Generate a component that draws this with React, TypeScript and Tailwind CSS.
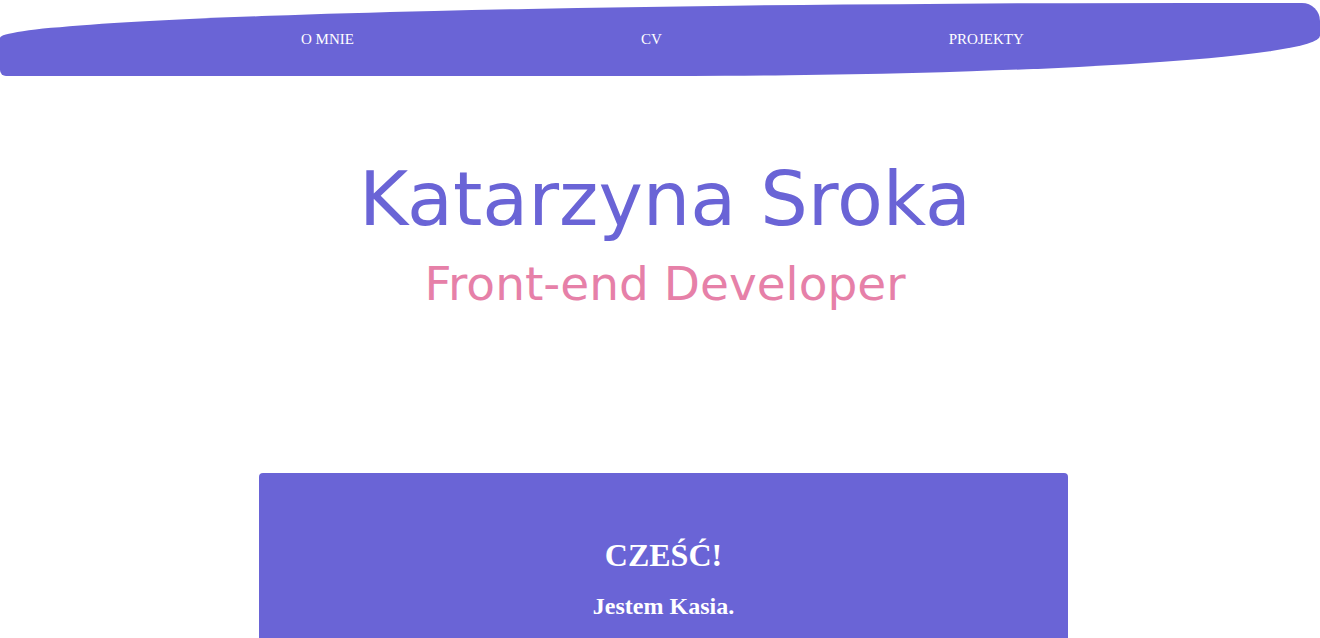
import React from 'react';

const links = ['O MNIE', 'CV', 'PROJEKTY'];

const App = () => {
  return (
    <div className="h-[638px] bg-white overflow-hidden font-['Liberation_Serif',serif]">
      <nav className="mt-[3px] h-[73px] bg-[#6a64d6] rounded-[90%_18px_50%_6px/48%_18px_55%_6px] flex items-center pl-[301px] gap-[287px]">
        {links.map(link => (
          <a key={link} href="#" className="text-white text-[15px] leading-none">
            {link}
          </a>
        ))}
      </nav>

      <header className="mt-[78px] pl-[10px] text-center font-['Comic_Sans_MS','DejaVu_Sans',sans-serif]">
        <h1 className="text-[75px] leading-[90px] text-[#6a64d6]">Katarzyna Sroka</h1>
        <h2 className="mt-[10px] text-[47px] leading-[60px] text-[#e680a8]">Front-end Developer</h2>
      </header>

      <section className="mt-[159px] ml-[259px] w-[809px] h-[165px] bg-[#6a64d6] rounded-t-[4px] pt-[62px] text-center text-white">
        <h3 className="text-[32px] font-bold leading-[40px]">CZEŚĆ!</h3>
        <p className="mt-[16px] text-[24px] font-bold leading-[30px]">Jestem Kasia.</p>
      </section>
    </div>
  );
};

export default App;
